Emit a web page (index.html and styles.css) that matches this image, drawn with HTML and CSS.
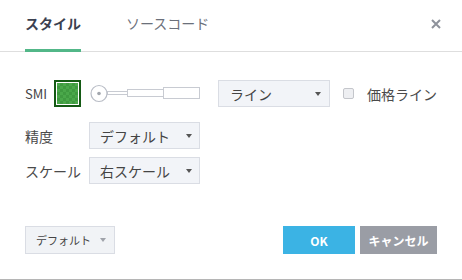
FILE: index.html
```html
<!DOCTYPE html>
<html lang="ja">
<head>
<meta charset="utf-8">
<link rel="stylesheet" href="styles.css">
</head>
<body>
<div class="dialog">
  <div class="tabs">
    <div class="tab active">スタイル</div>
    <div class="tab">ソースコード</div>
    <div class="close">
      <svg width="10" height="10" viewBox="0 0 10 10"><path d="M1 1L9 9M9 1L1 9" stroke="#8e929b" stroke-width="2"/></svg>
    </div>
  </div>
  <div class="content">
    <div class="row row-first">
      <span class="label-smi">SMI</span>
      <span class="swatch"><span class="swatch-fill"></span></span>
      <svg class="slider" width="111" height="27" viewBox="0 0 111 27">
        <rect x="17.5" y="11.5" width="21" height="3" fill="#fff" stroke="#c8cbd2"/>
        <rect x="37.5" y="9.5" width="36" height="7" fill="#fff" stroke="#c8cbd2"/>
        <rect x="73.5" y="7.5" width="36" height="11" fill="#fff" stroke="#c8cbd2"/>
        <rect x="38" y="12" width="1" height="2" fill="#fff"/>
        <rect x="74" y="10" width="1" height="6" fill="#fff"/>
        <circle cx="9" cy="13.5" r="8" fill="#fff" stroke="#b9bdc6" stroke-width="1.2"/>
        <circle cx="9" cy="13.5" r="1.8" fill="#a3a7ae"/>
      </svg>
      <div class="select sel-line">
        <span>ライン</span><span class="caret"></span>
      </div>
      <span class="checkbox"></span>
      <span class="check-label">価格ライン</span>
    </div>
    <div class="row row-second">
      <span class="label">精度</span>
      <div class="select sel-small">
        <span>デフォルト</span><span class="caret"></span>
      </div>
    </div>
    <div class="row row-third">
      <span class="label">スケール</span>
      <div class="select sel-small">
        <span>右スケール</span><span class="caret"></span>
      </div>
    </div>
  </div>
  <div class="footer">
    <div class="btn-default">
      <span>デフォルト</span><span class="caret caret-light"></span>
    </div>
    <div class="actions">
      <div class="btn btn-ok">OK</div>
      <div class="btn btn-cancel">キャンセル</div>
    </div>
  </div>
</div>
</body>
</html>
```
FILE: styles.css
```css
html, body {
  margin: 0;
  padding: 0;
  background: #fff;
}
body {
  font-family: "Noto Sans CJK JP", "Noto Sans", sans-serif;
  color: #4a4a4a;
}
.dialog {
  width: 462px;
  height: 280px;
  box-sizing: border-box;
  border-bottom: 1px solid #b5b5b5;
  display: flex;
  flex-direction: column;
}
.tabs {
  display: flex;
  height: 52px;
  box-sizing: border-box;
  border-bottom: 1px solid #dedede;
  padding-left: 25px;
  align-items: stretch;
}
.tab {
  height: 52px;
  box-sizing: border-box;
  margin-bottom: -1px;
  display: flex;
  align-items: center;
  padding-bottom: 4px;
  font-size: 14px;
  line-height: 1;
  color: #6b707a;
  border-bottom: 3px solid transparent;
  margin-right: 45px;
  white-space: nowrap;
}
.tab.active {
  font-weight: bold;
  color: #3b4150;
  border-bottom-color: #52b788;
}
.close {
  margin-left: auto;
  margin-right: 21px;
  display: flex;
  align-items: center;
  padding-bottom: 4px;
}
.content {
  padding: 28px 25px 0 25px;
  font-size: 14px;
}
.row {
  display: flex;
  align-items: center;
  height: 27px;
  white-space: nowrap;
}
.row > * {
  flex-shrink: 0;
}
.row-second { margin-top: 15px; }
.row-third { margin-top: 8px; }
.label-smi {
  width: 29px;
  font-size: 13px;
  color: #444;
}
.swatch {
  width: 27px;
  height: 27px;
  box-sizing: border-box;
  border: 2px solid #145a14;
  padding: 1px;
  background: #fff;
  display: flex;
}
.swatch-fill {
  flex: 1;
  background-color: #4aa84a;
  background-image: conic-gradient(#3f9a40 25%, transparent 0 50%, #3f9a40 0 75%, transparent 0);
  background-size: 6px 6px;
}
.slider {
  margin-left: 9px;
  display: block;
}
.select {
  height: 27px;
  box-sizing: border-box;
  border: 1px solid #dadde4;
  background: #f2f4f8;
  display: flex;
  align-items: center;
  justify-content: space-between;
  color: #444;
  font-size: 14px;
}
.sel-line {
  width: 112px;
  margin-left: 17px;
  padding: 0 8px 0 11px;
}
.sel-small {
  width: 111px;
  padding: 0 7px 0 10px;
}
.label {
  width: 64px;
  color: #4a4a4a;
}
.caret {
  width: 0;
  height: 0;
  border-left: 3.5px solid transparent;
  border-right: 3.5px solid transparent;
  border-top: 4px solid #555;
}
.caret-light {
  border-top-color: #a0a3aa;
  margin-left: 9px;
}
.checkbox {
  width: 11px;
  height: 11px;
  box-sizing: border-box;
  border: 1px solid #c4c6cb;
  border-radius: 2px;
  background: #eeeff2;
  margin-left: 13px;
}
.check-label {
  margin-left: 13px;
  color: #4a4a4a;
}
.footer {
  margin-top: auto;
  margin-bottom: 25px;
  padding: 0 25px;
  display: flex;
  align-items: center;
}
.btn-default {
  width: 90px;
  height: 28px;
  box-sizing: border-box;
  border: 1px solid #dadde4;
  background: #f1f3f6;
  display: flex;
  align-items: center;
  padding-left: 10px;
  font-size: 11px;
  color: #444;
}
.actions {
  margin-left: auto;
  display: flex;
  gap: 5px;
}
.btn {
  height: 28px;
  display: flex;
  align-items: center;
  justify-content: center;
  font-size: 12px;
  font-weight: bold;
  color: #fff;
}
.btn-ok {
  width: 72px;
  background: #3bb3e4;
}
.btn-cancel {
  width: 77px;
  background: #9a9da5;
}
```
